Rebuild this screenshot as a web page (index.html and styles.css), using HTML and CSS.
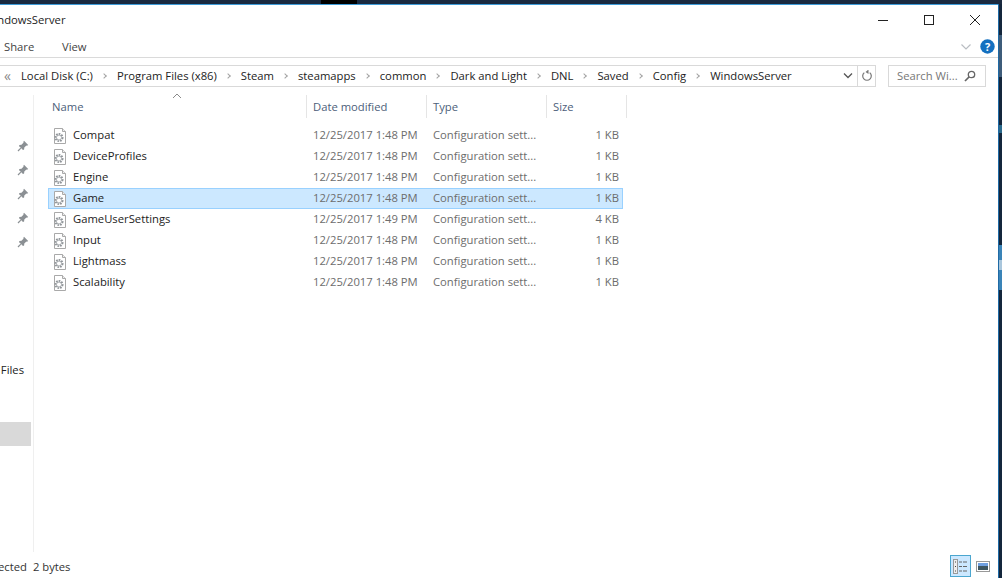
FILE: index.html
```html
<!DOCTYPE html>
<html lang="en">
<head>
<meta charset="utf-8">
<title>WindowsServer</title>
<link rel="stylesheet" href="styles.css">
</head>
<body>
<svg class="defs" width="0" height="0" aria-hidden="true">
  <symbol id="cfg" viewBox="0 0 16 16">
    <path d="M2.500.5h8l3 3v12h-11z" fill="#fff" stroke="#a9a9a9"/>
    <path d="M10.500.5v3h3" fill="#eee" stroke="#a9a9a9"/>
    <circle cx="7" cy="9.500" r="3.600" fill="none" stroke="#8f9498" stroke-width="1.800" stroke-dasharray="1.700 1"/>
    <circle cx="7" cy="9.500" r="2.500" fill="none" stroke="#a5a9ad"/>
  </symbol>
  <symbol id="pin" viewBox="0 0 12 12">
    <path d="M7 .8l4.200 4.200-1.200.7-.6-.3L7.300 7.500l-.2 2-1.100.6L1.900 6l.6-1.100 2-.2 2.100-2.100-.3-.6z" fill="#8b9094"/>
    <path d="M3.800 8.200L1 11" stroke="#8b9094" stroke-width="1.200"/>
  </symbol>
</svg>
<div class="desktop">
  <div class="topstrip"><span class="blackpiece"></span></div>
  <div class="main">
    <div class="window">
      <header class="titlebar">
        <span class="title">WindowsServer</span>
        <div class="caption">
          <svg width="12" height="12" viewBox="0 0 12 12"><path d="M1 6.500h10" stroke="#222"/></svg>
          <svg width="12" height="12" viewBox="0 0 12 12"><rect x="1.500" y="1.500" width="9" height="9" fill="none" stroke="#222"/></svg>
          <svg width="12" height="12" viewBox="0 0 12 12"><path d="M1 1l10 10M11 1L1 11" stroke="#222" fill="none"/></svg>
        </div>
      </header>
      <nav class="ribbon">
        <span class="tab">Share</span>
        <span class="tab">View</span>
        <span class="ribbon-right">
          <svg width="12" height="8" viewBox="0 0 12 8"><path d="M1.500 1.500L6 6l4.500-4.500" fill="none" stroke="#b9bdc2" stroke-width="1.200"/></svg>
          <svg class="help" width="15" height="15" viewBox="0 0 15 15"><circle cx="7.500" cy="7.500" r="7.200" fill="#1470c0"/><text x="7.500" y="11.500" text-anchor="middle" class="help-q">?</text></svg>
        </span>
      </nav>
      <div class="addressrow">
        <div class="address">
          <span class="chev-dbl">«</span>
          <span>Local Disk (C:)</span><i class="sep"></i>
          <span>Program Files (x86)</span><i class="sep"></i>
          <span>Steam</span><i class="sep"></i>
          <span>steamapps</span><i class="sep"></i>
          <span>common</span><i class="sep"></i>
          <span>Dark and Light</span><i class="sep"></i>
          <span>DNL</span><i class="sep"></i>
          <span>Saved</span><i class="sep"></i>
          <span>Config</span><i class="sep"></i>
          <span>WindowsServer</span>
          <svg class="drop" width="10" height="7" viewBox="0 0 10 7"><path d="M1 1.500l4 4 4-4" fill="none" stroke="#555" stroke-width="1.300"/></svg>
          <span class="refresh">
            <svg width="12" height="12" viewBox="0 0 12 12"><path d="M8.700 2.600A4.300 4.300 0 1 1 3.300 2.600" fill="none" stroke="#777" stroke-width="1.200"/><path d="M4.500 0v4.500L1.500 2.500z" fill="#777" transform="translate(3 -.5)"/></svg>
          </span>
        </div>
        <div class="search">
          <span>Search Wi...</span>
          <svg width="12" height="12" viewBox="0 0 12 12"><circle cx="7.500" cy="4.500" r="3.200" fill="none" stroke="#666" stroke-width="1.300"/><path d="M5 7L1 11" stroke="#666" stroke-width="1.700"/></svg>
        </div>
      </div>
      <div class="body">
        <aside class="sidebar">
          <svg class="pin" width="12" height="12"><use href="#pin"/></svg>
          <svg class="pin" width="12" height="12"><use href="#pin"/></svg>
          <svg class="pin" width="12" height="12"><use href="#pin"/></svg>
          <svg class="pin" width="12" height="12"><use href="#pin"/></svg>
          <svg class="pin" width="12" height="12"><use href="#pin"/></svg>
          <div class="side-files">Files</div>
          <div class="side-active"></div>
        </aside>
        <section class="list">
          <div class="sortcaret"><svg width="10" height="6" viewBox="0 0 10 6"><path d="M1 5l4-4 4 4" fill="none" stroke="#8a8a8a"/></svg></div>
          <div class="head">
            <span class="hname">Name</span><span>Date modified</span><span>Type</span><span>Size</span>
          </div>
          <div class="rows">
            <div class="row"><span class="name"><svg width="16" height="16"><use href="#cfg"/></svg>Compat</span><span>12/25/2017 1:48 PM</span><span>Configuration sett...</span><span class="size">1 KB</span></div>
            <div class="row"><span class="name"><svg width="16" height="16"><use href="#cfg"/></svg>DeviceProfiles</span><span>12/25/2017 1:48 PM</span><span>Configuration sett...</span><span class="size">1 KB</span></div>
            <div class="row"><span class="name"><svg width="16" height="16"><use href="#cfg"/></svg>Engine</span><span>12/25/2017 1:48 PM</span><span>Configuration sett...</span><span class="size">1 KB</span></div>
            <div class="row selected"><span class="name"><svg width="16" height="16"><use href="#cfg"/></svg>Game</span><span>12/25/2017 1:48 PM</span><span>Configuration sett...</span><span class="size">1 KB</span></div>
            <div class="row"><span class="name"><svg width="16" height="16"><use href="#cfg"/></svg>GameUserSettings</span><span>12/25/2017 1:49 PM</span><span>Configuration sett...</span><span class="size">4 KB</span></div>
            <div class="row"><span class="name"><svg width="16" height="16"><use href="#cfg"/></svg>Input</span><span>12/25/2017 1:48 PM</span><span>Configuration sett...</span><span class="size">1 KB</span></div>
            <div class="row"><span class="name"><svg width="16" height="16"><use href="#cfg"/></svg>Lightmass</span><span>12/25/2017 1:48 PM</span><span>Configuration sett...</span><span class="size">1 KB</span></div>
            <div class="row"><span class="name"><svg width="16" height="16"><use href="#cfg"/></svg>Scalability</span><span>12/25/2017 1:48 PM</span><span>Configuration sett...</span><span class="size">1 KB</span></div>
          </div>
        </section>
      </div>
      <footer class="status">
        <span class="st-sel">ected</span><span class="st-size">2 bytes</span>
        <span class="views">
          <span class="view active">
            <svg width="17" height="17" viewBox="0 0 17 17"><rect x="1.500" y="1.500" width="4" height="14" fill="#eee" stroke="#999"/><path d="M3 4h1M3 8.500h1M3 13h1" stroke="#444"/><path d="M7 4h3M11 4h4M7 8.500h3M11 8.500h4M7 13h3M11 13h4" stroke="#666"/></svg>
          </span>
          <svg class="view-thumb" width="14" height="11" viewBox="0 0 14 11"><rect x=".5" y=".5" width="13" height="10" fill="#fff" stroke="#999"/><rect x="2" y="2" width="10" height="3" fill="#6f9fe0"/><rect x="2" y="5" width="10" height="4" fill="#3d5560"/></svg>
        </span>
      </footer>
    </div>
    <div class="gutter">
      <div class="gut g1"></div>
      <div class="gut g2"></div>
      <div class="gut g3"></div>
      <div class="gut g4"></div>
      <div class="gut g5"></div>
      <div class="gut g6"></div>
      <div class="gut g7"></div>
      <div class="gut g8"></div>
    </div>
  </div>
</div>
</body>
</html>
```
FILE: styles.css
```css
* { box-sizing: border-box; }
html, body { margin: 0; padding: 0; }
body { width: 1002px; height: 578px; overflow: hidden; font-family: "Open Sans", "Liberation Sans", sans-serif; font-size: 11.25px; color: #222; background: #16263a; }
.defs { position: absolute; }
.desktop { display: flex; flex-direction: column; height: 578px; }
.topstrip { height: 4px; flex: none; background: #1a2a40; padding-left: 321px; }
.blackpiece { display: block; width: 36px; height: 4px; background: #000; }
.main { flex: 1; display: flex; min-height: 0; }
.window { flex: 1; min-width: 0; display: flex; flex-direction: column; background: #fff; border-top: 1px solid #3d9bd8; overflow: hidden; }
.gutter { width: 4px; flex: none; display: flex; flex-direction: column; background: #14263c; border-left: 1px solid #1f6aa5; }
.gut { flex: none; }
.g1 { height: 31px; }
.g2 { height: 42px; background: #3e5c7a; }
.g3 { height: 48px; }
.g4 { height: 8px; background: #2a6a8c; }
.g5 { height: 112px; }
.g6 { height: 15px; background: #3a84b8; }
.g7 { height: 10px; background: #a9c6dc; }
.g8 { height: 20px; background: #3a84b8; }

.titlebar { height: 29px; flex: none; display: flex; align-items: center; }
.title { margin-left: -16px; }
.caption { margin-left: auto; display: flex; gap: 34px; padding-right: 17px; }

.ribbon { height: 24px; flex: none; display: flex; align-items: center; color: #444; border-bottom: 1px solid #dadada; padding-top: 2px; }
.tab { margin-left: 4px; width: 54px; }
.ribbon-right { margin-left: auto; display: flex; align-items: center; gap: 8px; padding-right: 3px; }
.help-q { font: bold 11px "Open Sans", sans-serif; fill: #fff; }

.addressrow { margin-top: 7px; height: 22px; flex: none; display: flex; }
.address { width: 876px; margin-right: 12px; flex: none; display: flex; align-items: center; border: 1px solid #d9d9d9; border-left: 0; white-space: nowrap; padding: 0 0 1px 4px; }
.chev-dbl { width: 17px; color: #888; font-size: 14px; line-height: 14px; }
.sep { width: 4px; height: 4px; margin: 1px 11px 0 9px; border-top: 1.500px solid #a3a3a3; border-right: 1.500px solid #a3a3a3; transform: rotate(45deg); }
.drop { margin-left: auto; margin-right: 4px; }
.refresh { width: 18px; height: 20px; border-left: 1px solid #d9d9d9; display: flex; align-items: center; justify-content: center; }
.search { width: 98px; display: flex; align-items: center; justify-content: space-between; padding: 0 9px 1px 8px; border: 1px solid #d9d9d9; color: #777; }

.body { flex: 1; min-height: 0; display: flex; margin-top: 8px; }
.sidebar { width: 34px; flex: none; border-right: 1px solid #efefef; display: flex; flex-direction: column; align-items: flex-end; }
.pin { flex: none; margin: 6px 5px 6px 0; transform: translateX(1px); }
.pin:first-child { margin-top: 45px; }
.side-files { margin-top: 107px; padding-right: 9px; line-height: 17px; }
.side-active { margin-top: 44px; width: 31px; margin-right: 2px; height: 24px; background: #d9d9d9; align-self: flex-start; }

.list { flex: 1; min-width: 0; position: relative; padding-left: 14px; }
.sortcaret { position: absolute; left: 138px; top: -2px; line-height: 0; }
.head { display: grid; grid-template-columns: 259px 120px 120px 80px; height: 23px; width: 579px; color: #4c607a; }
.head span { display: flex; align-items: center; padding-left: 6px; border-right: 1px solid #e5e5e5; }
.head .hname { padding-left: 4px; }
.rows { margin-top: 7px; }
.row { display: grid; grid-template-columns: 259px 120px 120px 76px; height: 21px; width: 575px; align-items: center; color: #6d6d6d; border: 1px solid transparent; }
.row span { padding: 0 0 2px 5px; white-space: nowrap; }
.row .name { display: flex; align-items: center; gap: 5px; padding-left: 3px; color: #222; }
.row .name svg { margin-bottom: -2px; }
.row .size { text-align: right; padding-right: 5px; }
.row.selected { background: #cce8ff; border-color: #99d1ff; }

.status { height: 26px; flex: none; display: flex; align-items: center; color: #333; padding-top: 2px; }
.st-sel { margin-left: -2px; }
.st-size { margin-left: 6px; }
.views { margin-left: auto; display: flex; align-items: center; gap: 5px; padding-right: 8px; }
.view { width: 21px; height: 22px; display: flex; align-items: center; justify-content: center; background: #cce8ff; border: 1px solid #4ba6cf; }
.view-thumb { flex: none; }
```
